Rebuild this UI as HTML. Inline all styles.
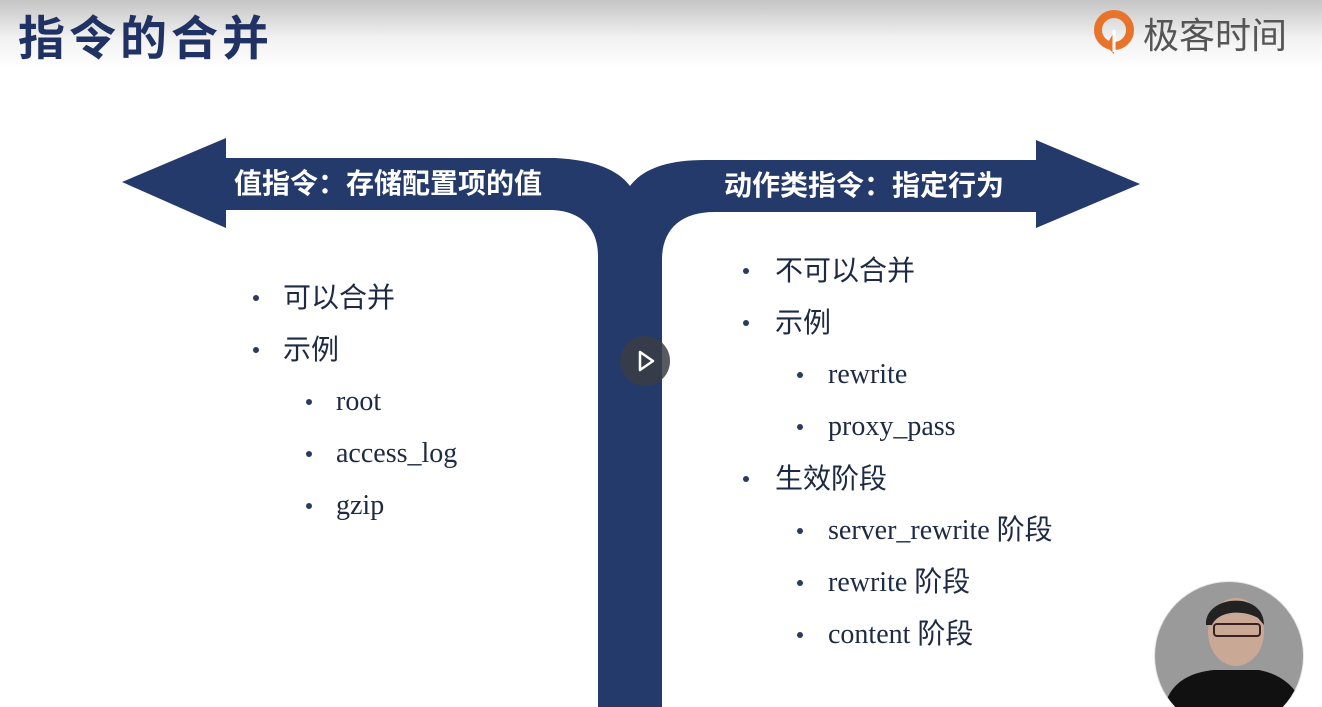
<!DOCTYPE html>
<html><head><meta charset="utf-8"><style>
body{margin:0;width:1322px;height:707px;overflow:hidden;background:#fff;position:relative;font-family:"Liberation Sans","Noto Sans CJK SC",sans-serif}
.hdr{position:absolute;left:0;top:0;width:1322px;height:70px;background:linear-gradient(#c4c4c4,#f2f2f2 55%,#fff)}
.title{position:absolute;left:18px;top:6px;font-size:47px;font-weight:bold;color:#1f3263;letter-spacing:4px;line-height:66px}
.logo{position:absolute;left:1143px;top:12px;font-size:36px;color:#555;line-height:48px}
.t{position:absolute;font-size:28px;color:#1e2a44;white-space:nowrap;line-height:30px}
.s{font-family:"Liberation Serif","Noto Sans CJK SC",serif;font-size:28px}
.b{position:absolute;width:6px;height:6px;border-radius:50%;background:#2a3a60}
</style></head><body>
<div class="hdr"></div>
<div class="title">指令的合并</div>
<svg style="position:absolute;left:1092px;top:8px" width="46" height="50" viewBox="0 0 46 50"><circle cx="22" cy="22" r="16" fill="none" stroke="#e8732a" stroke-width="8"/><path d="M22 24 L22 46 L14 38 Z" fill="#e8732a"/><path d="M22 22 L22 44" stroke="#fff" stroke-width="3"/></svg>
<div class="logo">极客时间</div>
<svg style="position:absolute;left:0;top:0" width="1322" height="707">
<path fill="#243a6b" d="M122 182 L226 138 L226 158 L555 158 C595 160 618 170 630 186 C642 170 665 160 705 160 L1036 160 L1036 140 L1140 184 L1036 228 L1036 212 L715 212 C680 212 662 230 662 260 L662 707 L598 707 L598 255 C598 228 580 210 550 210 L226 210 L226 228 Z"/>
<text x="234" y="193" font-size="28" font-weight="bold" fill="#fff" font-family="Liberation Sans,Noto Sans CJK SC,sans-serif">值指令：存储配置项的值</text>
<text x="724" y="195" font-size="28" font-weight="bold" fill="#fff" font-family="Liberation Sans,Noto Sans CJK SC,sans-serif">动作类指令：指定行为</text>
</svg>
<div class="b" style="left:253px;top:295px"></div><div class="t" style="left:283px;top:283px">可以合并</div>
<div class="b" style="left:253px;top:347px"></div><div class="t" style="left:283px;top:335px">示例</div>
<div class="b" style="left:306px;top:399px"></div><div class="t s" style="left:336px;top:387px">root</div>
<div class="b" style="left:306px;top:451px"></div><div class="t s" style="left:336px;top:439px">access_log</div>
<div class="b" style="left:306px;top:503px"></div><div class="t s" style="left:336px;top:491px">gzip</div>
<div class="b" style="left:743px;top:268px"></div><div class="t" style="left:775px;top:256px">不可以合并</div>
<div class="b" style="left:743px;top:320px"></div><div class="t" style="left:775px;top:308px">示例</div>
<div class="b" style="left:797px;top:372px"></div><div class="t s" style="left:828px;top:360px">rewrite</div>
<div class="b" style="left:797px;top:424px"></div><div class="t s" style="left:828px;top:412px">proxy_pass</div>
<div class="b" style="left:743px;top:476px"></div><div class="t" style="left:775px;top:464px">生效阶段</div>
<div class="b" style="left:797px;top:528px"></div><div class="t s" style="left:828px;top:516px">server_rewrite 阶段</div>
<div class="b" style="left:797px;top:580px"></div><div class="t s" style="left:828px;top:568px">rewrite 阶段</div>
<div class="b" style="left:797px;top:632px"></div><div class="t s" style="left:828px;top:620px">content 阶段</div>
<svg style="position:absolute;left:620px;top:336px" width="50" height="50"><circle cx="25" cy="25" r="25" fill="#3a3d44" fill-opacity=".85"/><path d="M20 16 L33 25 L20 34 Z" fill="none" stroke="#fff" stroke-width="2.5" stroke-linejoin="round"/></svg>
<svg style="position:absolute;left:1154px;top:580px" width="152" height="127"><defs><clipPath id="c"><circle cx="75" cy="76" r="74"/></clipPath></defs><circle cx="75" cy="76" r="75" fill="#e6e6e6"/><g clip-path="url(#c)"><rect width="152" height="160" fill="#9a9a9a"/><ellipse cx="82" cy="52" rx="28" ry="34" fill="#c9a896"/><path d="M52 45 C50 15 110 10 110 45 L104 38 C90 30 65 30 58 45 Z" fill="#222"/><rect x="60" y="44" width="46" height="12" rx="3" fill="none" stroke="#3a2020" stroke-width="2"/><path d="M10 130 C15 100 40 92 60 90 L105 90 C130 95 145 110 150 130 Z" fill="#111"/></g></svg>
</body></html>
